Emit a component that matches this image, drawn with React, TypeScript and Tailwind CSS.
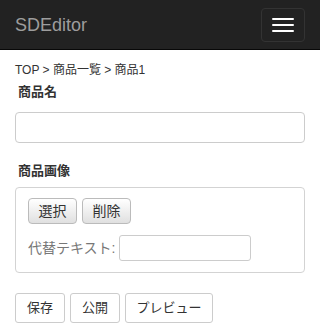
import React from "react";

export default function App() {
  return (
    <div className="w-[320px] h-[334px] bg-white text-[#333] overflow-hidden font-['Liberation_Sans','Noto_Sans_CJK_JP',sans-serif]">
      <header className="h-[50px] bg-[#222] border-b border-[#080808] flex items-center justify-between pl-[15px] pr-[15px]">
        <span className="text-[18px] leading-[20px] text-[#9d9d9d]">SDEditor</span>
        <button className="w-[44px] h-[34px] border border-[#333] rounded-[4px] flex flex-col items-center justify-center gap-[4px]">
          <span className="block w-[22px] h-[2px] bg-white rounded-[1px]" />
          <span className="block w-[22px] h-[2px] bg-white rounded-[1px]" />
          <span className="block w-[22px] h-[2px] bg-white rounded-[1px]" />
        </button>
      </header>
      <main className="px-[15px]">
        <div className="mt-[12px] text-[12px] leading-[16px]">TOP &gt; 商品一覧 &gt; 商品1</div>
        <div className="mt-[6px] pl-[3px] text-[13px] leading-[16px] font-bold">商品名</div>
        <input className="mt-[12px] block w-full h-[31px] border border-[#ccc] rounded-[4px] outline-none" />
        <div className="mt-[20px] pl-[3px] text-[13px] leading-[16px] font-bold">商品画像</div>
        <div className="mt-[8px] h-[86px] border border-[#d3d3d3] rounded-[4px] px-[12px] pt-[10px]">
          <div className="flex gap-[5px] h-[26px]">
            <button className="h-[26px] w-[49px] border border-[#bbb] rounded-[4px] bg-[linear-gradient(to_bottom,#ffffff,#e0e0e0)] text-[14px] leading-[24px] text-[#333]">選択</button>
            <button className="h-[26px] w-[49px] border border-[#bbb] rounded-[4px] bg-[linear-gradient(to_bottom,#ffffff,#e0e0e0)] text-[14px] leading-[24px] text-[#333]">削除</button>
          </div>
          <div className="mt-[11px] flex items-center h-[26px] gap-[4px]">
            <span className="text-[14px] leading-[16px] text-[#777]">代替テキスト:</span>
            <input className="block w-[132px] h-[26px] border border-[#ccc] rounded-[3px] outline-none" />
          </div>
        </div>
        <div className="mt-[20px] flex gap-[5px]">
          <button className="h-[30px] w-[50px] border border-[#ccc] rounded-[3px] bg-white text-[13px] text-[#333]">保存</button>
          <button className="h-[30px] w-[50px] border border-[#ccc] rounded-[3px] bg-white text-[13px] text-[#333]">公開</button>
          <button className="h-[30px] w-[88px] border border-[#ccc] rounded-[3px] bg-white text-[13px] text-[#333]">プレビュー</button>
        </div>
      </main>
    </div>
  );
}
